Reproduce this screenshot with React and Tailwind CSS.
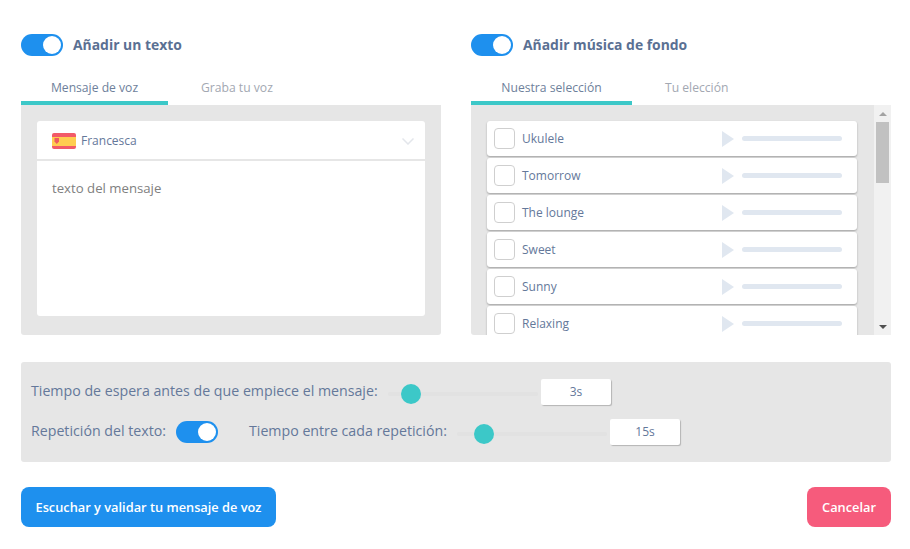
const font = { fontFamily: '"Open Sans", sans-serif' };

function Toggle() {
  return (
    <div className="flex h-[22px] w-[42px] shrink-0 items-center justify-end rounded-full bg-[#1e90ee] pr-[2px]">
      <div className="h-[18px] w-[18px] rounded-full bg-white" />
    </div>
  );
}

function Tabs({ first, second, w, secondMl }) {
  return (
    <div className="mt-[18px] flex h-[31px] text-[12.15px] leading-[28px]">
      <div className={`${w} h-[31px] border-b-4 border-[#3cc8c8] text-center text-[#6e7f9b]`}>{first}</div>
      <div className={`${secondMl} text-[#a3a8b2]`}>{second}</div>
    </div>
  );
}

function Flag() {
  return (
    <svg width="24" height="16" viewBox="0 0 24 16" className="shrink-0">
      <rect width="24" height="16" rx="2" fill="#f25a68" />
      <rect y="4" width="24" height="9" fill="#ffcd50" />
      <path d="M2.5 5h4.5v3.6L4.8 11 2.5 8.6z" fill="#ee5a5f" />
    </svg>
  );
}

function Track() {
  return (
    <div className="ml-auto mr-[15px] flex items-center">
      <svg width="12" height="16" viewBox="0 0 12 16" className="mr-[8px]"><path d="M0 0l12 8-12 8z" fill="#e0e7f0" /></svg>
      <div className="h-[5px] w-[100px] rounded-full bg-[#e0e7f0]" />
    </div>
  );
}

function Song({ name }) {
  return (
    <div className="flex h-[35px] shrink-0 items-center rounded-[3px] bg-white pl-[7px] shadow-[0_1px_2px_rgba(0,0,0,0.3)]">
      <div className="h-[21px] w-[21px] rounded-[4px] border border-[#cfcfcf] bg-white" />
      <span className="ml-[7px] text-[12px] text-[#64789a]">{name}</span>
      <Track />
    </div>
  );
}

function Slider({ trackW, thumb }) {
  return (
    <div className={`relative ${trackW} mt-[3px] flex h-5 shrink-0 items-center`}>
      <div className="h-[4px] w-full rounded-full bg-[#e2e2e2]" />
      <div className={`absolute top-0 ${thumb} h-5 w-5 rounded-full bg-[#3cc8c8]`} />
    </div>
  );
}

function ValueBox({ children, ml }) {
  return (
    <div className={`${ml} flex h-[26px] w-[70px] shrink-0 items-center justify-center rounded-[2px] bg-white text-[12px] text-[#64789a] shadow-[1px_1px_1px_rgba(0,0,0,0.22)]`}>
      {children}
    </div>
  );
}

export default function App() {
  return (
    <div style={font} className="h-[549px] w-[910px] overflow-hidden bg-white pl-[21px] pr-[19px] pt-[34px]">
      <div className="flex gap-[30px]">
        <div className="w-[420px] shrink-0">
          <div className="flex items-center gap-[10px]">
            <Toggle />
            <span className="text-[13.9px] font-bold text-[#5a7093]">Añadir un texto</span>
          </div>
          <Tabs first="Mensaje de voz" second="Graba tu voz" w="w-[147px]" secondMl="ml-[33px]" />
          <div className="h-[230px] rounded-b-[3px] bg-[#e6e6e6] p-4 pb-[19px]">
            <div className="flex h-full flex-col rounded-[3px] bg-white">
              <div className="flex h-[40px] shrink-0 items-center border-b-2 border-[#e6e6e6] pl-[15px] pr-[11px] pt-[2px]">
                <Flag />
                <span className="ml-[5px] text-[12px] text-[#64789a]">Francesca</span>
                <svg width="12" height="7" viewBox="0 0 12 7" className="ml-auto"><path d="M.5.5L6 6 11.5.5" fill="none" stroke="#e3e6eb" strokeWidth="1.5" /></svg>
              </div>
              <div className="px-[15px] pt-[18px] text-[13.2px] text-[#808080]">texto del mensaje</div>
            </div>
          </div>
        </div>

        <div className="w-[420px] shrink-0">
          <div className="flex items-center gap-[10px]">
            <Toggle />
            <span className="text-[13.9px] font-bold text-[#5a7093]">Añadir música de fondo</span>
          </div>
          <Tabs first="Nuestra selección" second="Tu elección" w="w-[161px]" secondMl="ml-[33px]" />
          <div className="flex h-[230px] overflow-hidden rounded-bl-[3px] bg-[#e6e6e6]">
            <div className="flex grow flex-col gap-[2px] pl-4 pr-[17px] pt-4">
              <Song name="Ukulele" />
              <Song name="Tomorrow" />
              <Song name="The lounge" />
              <Song name="Sweet" />
              <Song name="Sunny" />
              <Song name="Relaxing" />
            </div>
            <div className="flex w-[17px] shrink-0 flex-col items-center justify-between bg-[#f1f1f1] pb-[4px] pt-[7px]">
              <div className="flex w-full flex-col items-center">
                <div className="h-0 w-0 border-x-[4px] border-b-[4px] border-x-transparent border-b-[#a3a3a3]" />
                <div className="mt-[6px] h-[61px] w-[13px] bg-[#c1c1c1]" />
              </div>
              <div className="mb-[2px] h-0 w-0 border-x-[4px] border-t-[4px] border-x-transparent border-t-[#505050]" />
            </div>
          </div>
        </div>
      </div>

      <div className="mt-[27px] h-[100px] rounded-[3px] bg-[#e6e6e6] pl-[10px] pt-[17px] text-[14.2px] text-[#64789a]">
        <div className="flex h-[26px] items-center">
          <span className="w-[357px] shrink-0 pb-[2px]">Tiempo de espera antes de que empiece el mensaje:</span>
          <Slider trackW="w-[150px]" thumb="left-[13px]" />
          <ValueBox ml="ml-[3px]">3s</ValueBox>
        </div>
        <div className="mt-[14px] flex h-[26px] items-center">
          <span className="w-[145px] shrink-0 pb-[2px]">Repetición del texto:</span>
          <Toggle />
          <span className="ml-[31px] w-[208px] shrink-0 pb-[2px]">Tiempo entre cada repetición:</span>
          <Slider trackW="w-[150px]" thumb="left-[17px]" />
          <ValueBox ml="ml-[3px]">15s</ValueBox>
        </div>
      </div>

      <div className="mt-[25px] flex justify-between">
        <div className="flex h-10 w-[255px] items-center justify-center rounded-[8px] bg-[#1e90ee] pt-[1px] text-[12.8px] font-semibold text-white">Escuchar y validar tu mensaje de voz</div>
        <div className="flex h-10 w-[84px] items-center justify-center rounded-[8px] bg-[#f65b7c] pt-[1px] text-[12.8px] font-semibold text-white">Cancelar</div>
      </div>
    </div>
  );
}
